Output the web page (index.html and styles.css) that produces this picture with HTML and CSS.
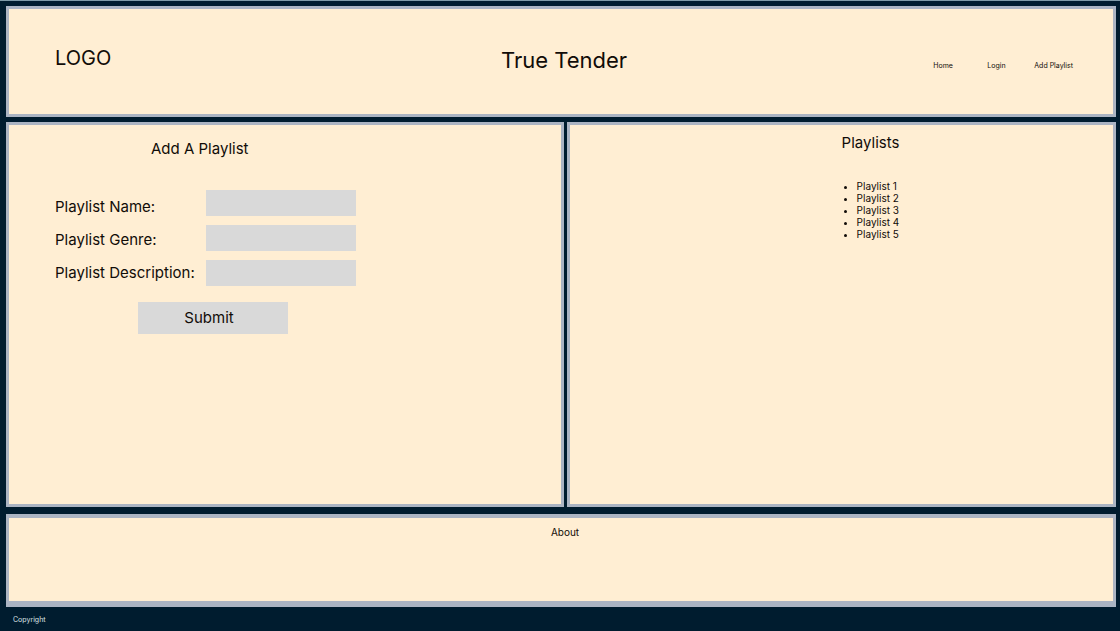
FILE: index.html
```html
<!DOCTYPE html>
<html lang="en">
<head>
  <meta charset="utf-8">
  <meta name="viewport" content="width=device-width, initial-scale=1">
  <title>True Tender</title>
  <link rel="stylesheet" href="styles.css">
</head>
<body>
  <header class="panel header">
    <div class="logo">LOGO</div>
    <h1 class="title">True Tender</h1>
    <nav class="nav">
      <a href="#home">Home</a>
      <a href="#login">Login</a>
      <a href="#add">Add Playlist</a>
    </nav>
  </header>

  <main class="main">
    <section class="panel add" id="add">
      <form class="form">
        <h2 class="heading form-heading">Add A Playlist</h2>
        <div class="fields">
          <div class="labels">
            <label for="name">Playlist Name:</label>
            <label for="genre">Playlist Genre:</label>
            <label for="description">Playlist Description:</label>
          </div>
          <div class="inputs">
            <input type="text" id="name">
            <input type="text" id="genre">
            <input type="text" id="description">
          </div>
        </div>
        <button type="submit" class="submit">Submit</button>
      </form>
    </section>

    <section class="panel playlists">
      <div class="playlists-body">
        <h2 class="heading">Playlists</h2>
        <ul class="list">
          <li>Playlist 1</li>
          <li>Playlist 2</li>
          <li>Playlist 3</li>
          <li>Playlist 4</li>
          <li>Playlist 5</li>
        </ul>
      </div>
    </section>
  </main>

  <section class="panel about">
    <h2 class="about-heading">About</h2>
  </section>

  <footer class="footer">Copyright</footer>
</body>
</html>
```
FILE: styles.css
```css
* {
  box-sizing: border-box;
}

body {
  display: flex;
  flex-direction: column;
  min-height: 100vh;
  margin: 0;
  padding: 5px 4px 0 6px;
  border-top: 1px solid #7f9aa8;
  background: #001c2f;
  color: #110c08;
  font-family: Inter, "Liberation Sans", sans-serif;
}

h1,
h2,
ul {
  margin: 0;
  padding: 0;
  font-weight: 400;
}

.panel {
  border: 3px solid #abb4c3;
  background: #ffeed3;
}

.header {
  display: grid;
  grid-template-columns: 1fr auto 1fr;
  padding: 35px 40px 38px 46px;
}

.logo {
  font-size: 20px;
  line-height: 28px;
}

.title {
  font-size: 22px;
  line-height: 32px;
}

.nav {
  display: grid;
  grid-template-columns: 54px 47px auto;
  justify-content: end;
  padding-top: 16px;
  font-size: 7px;
  line-height: 12px;
}

.nav a {
  color: inherit;
  text-decoration: none;
}

.main {
  display: grid;
  flex: 1;
  grid-template-columns: 558fr 549fr;
  gap: 3px;
  margin: 5px 0 7px;
}

.add {
  padding: 14px 46px;
}

.form {
  width: 301px;
}

.heading {
  font-size: 15px;
  line-height: 20px;
}

.form-heading {
  padding-left: 96px;
}

.fields {
  display: flex;
  justify-content: space-between;
  margin-top: 31px;
}

.labels {
  display: grid;
  gap: 13px;
  align-content: end;
  padding-bottom: 3px;
  font-size: 15px;
  line-height: 20px;
}

.inputs {
  display: grid;
  gap: 9px;
  width: 150px;
}

.inputs input {
  width: 100%;
  height: 26px;
  padding: 0 6px;
  border: 0;
  background: #d9d9d9;
  font: inherit;
}

.submit {
  display: block;
  width: 150px;
  height: 32px;
  margin: 16px 0 0 83px;
  padding: 0 8px 2px 0;
  border: 0;
  background: #d9d9d9;
  color: inherit;
  font: inherit;
  font-size: 15px;
}

.playlists {
  display: flex;
  justify-content: center;
  padding: 8px 0 0 58px;
}

.list {
  margin-top: 27px;
  padding-left: 15px;
  font-size: 10px;
  line-height: 12px;
}

.about {
  min-height: 93px;
  padding: 8px 0 0 8px;
  border-width: 4px 3px 6px;
}

.about-heading {
  font-size: 10px;
  line-height: 12px;
  text-align: center;
}

.footer {
  padding: 7px 7px 5px;
  color: #dfe3e6;
  font-size: 7px;
  line-height: 12px;
}
```
